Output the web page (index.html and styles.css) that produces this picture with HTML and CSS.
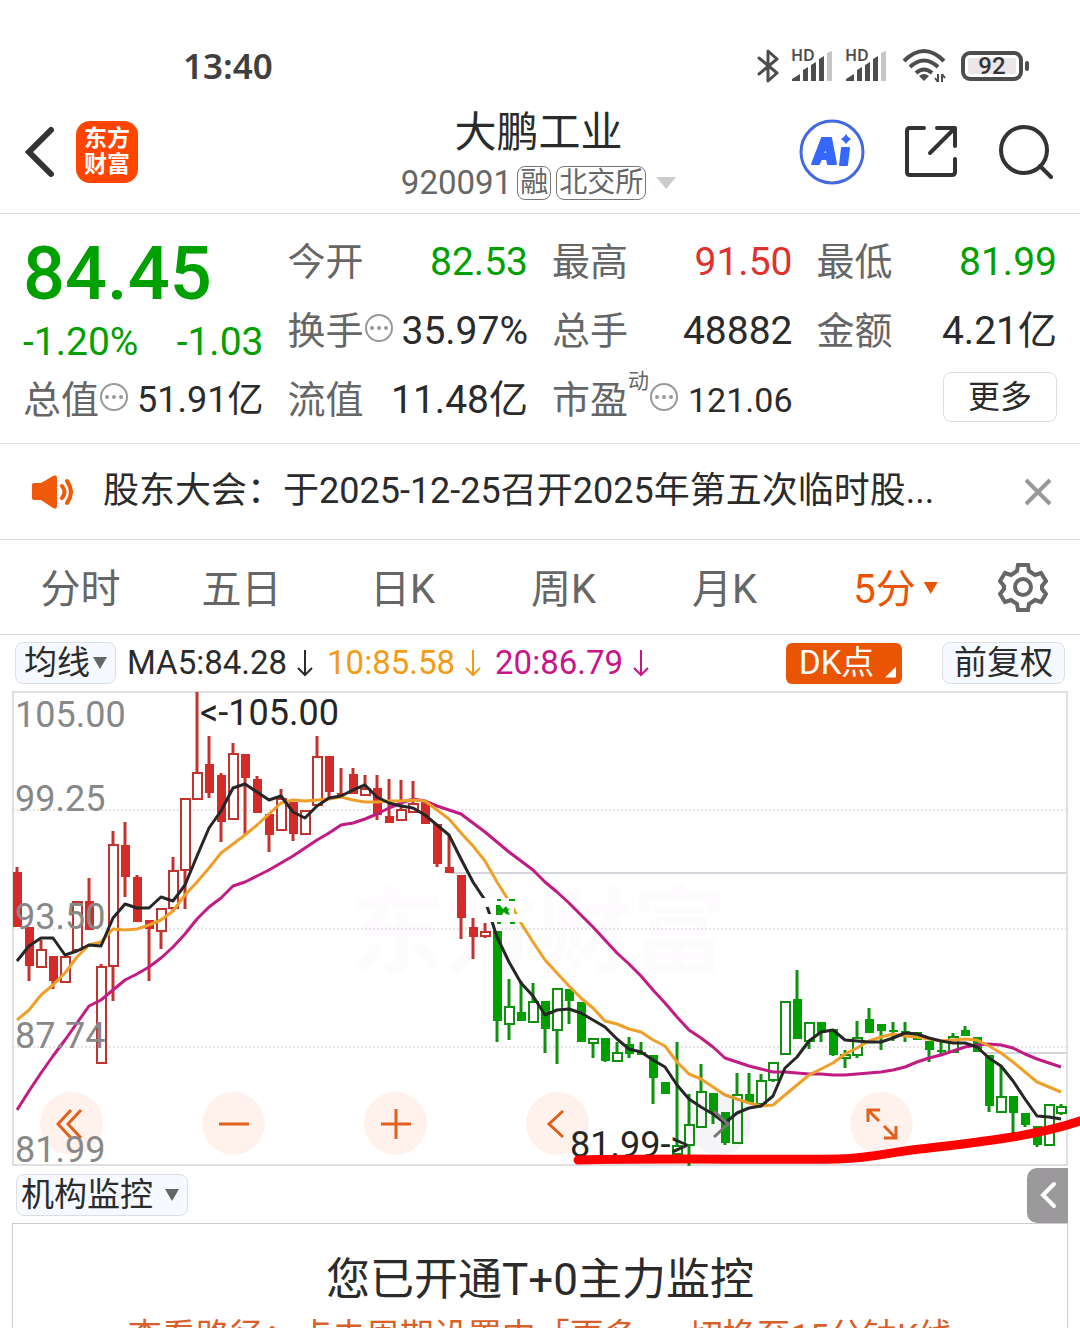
FILE: index.html
```html
<!DOCTYPE html>
<html lang="zh-CN">
<head>
<meta charset="utf-8">
<meta name="viewport" content="width=device-width, initial-scale=1">
<title>大鹏工业 920091</title>
<link rel="stylesheet" href="styles.css">
</head>
<body>
<div class="page">
  <div class="status">
    <time class="clock">13:40</time>
    <div class="status-icons">
      <svg width="22" height="34" viewBox="0 0 22 34" fill="none" stroke="#4d4d4d" stroke-width="3" stroke-linejoin="round" stroke-linecap="round"><path d="M2 9 20 24 11 32V2L20 10 2 25"/></svg>
      <svg class="signal" width="42" height="34" viewBox="0 0 42 34"><text x="0" y="12">HD</text><g fill="#4d4d4d"><path d="M1 32v-2l8-5v7z"/><path d="M12 32V21l5-3v14zM20 32V16l5-3v19zM28 32V10l5-3v25z"/></g><path fill="#c6c6c6" d="M36 32V4l5-2v30z"/></svg>
      <svg class="signal" width="42" height="34" viewBox="0 0 42 34"><text x="0" y="12">HD</text><g fill="#4d4d4d"><path d="M1 32v-2l8-5v7z"/><path d="M12 32V21l5-3v14zM20 32V16l5-3v19zM28 32V10l5-3v25z"/></g><path fill="#c6c6c6" d="M36 32V4l5-2v30z"/></svg>
      <svg class="wifi" width="42" height="36" viewBox="0 0 42 36" fill="none" stroke="#4d4d4d" stroke-width="4"><path d="M1 13Q21-7 41 13M7 19Q21 6 35 19M13 25Q21 18 29 25"/><path d="M21 33l-5-5q5-4 10 0z" fill="#4d4d4d" stroke="none"/><path d="M35 26v8m-3-4 3 4M39 34v-8m3 4-3-4" stroke-width="2"/></svg>
      <span class="battery">92</span>
    </div>
  </div>

  <header class="header">
    <div class="header-left">
      <button class="icon-btn" aria-label="返回"><svg width="32" height="56" viewBox="0 0 32 56" fill="none" stroke="#333" stroke-width="6" stroke-linecap="round" stroke-linejoin="miter"><path d="M27 6 5 28 27 50"/></svg></button>
      <a class="logo" href="#">东方<br>财富</a>
    </div>
    <div class="title">
      <h1>大鹏工业</h1>
      <p class="code"><span>920091</span><span class="tag">融</span><span class="tag">北交所</span><span class="caret caret-code"></span></p>
    </div>
    <div class="header-right">
      <button class="icon-btn" aria-label="AI"><svg width="66" height="66" viewBox="0 0 66 66"><circle cx="33" cy="33" r="31" fill="#fff" stroke="#4169e1" stroke-width="3"/><g fill="#3568fa" stroke="#3568fa" stroke-width="2" stroke-linejoin="round"><path fill-rule="evenodd" d="M23 19h9l5 26h-8l-1-5h-6l-2 5h-7zM27 27l-3 8h4z"/><path d="M43 29h7l-2 17h-7z"/></g><path fill="#3568fa" d="M47 15q2 4 5 5-3 2-5 5-2-3-5-5 3-1 5-5z"/></svg></button>
      <button class="icon-btn" aria-label="分享"><svg width="54" height="54" viewBox="0 0 54 54" fill="none" stroke="#333" stroke-width="4" stroke-linecap="round" stroke-linejoin="round"><path d="M20 3H6Q3 3 3 6V47Q3 50 6 50H48Q51 50 51 47V34M33 3H51V21M51 3 26 28"/></svg></button>
      <button class="icon-btn" aria-label="搜索"><svg width="56" height="56" viewBox="0 0 56 56" fill="none" stroke="#333" stroke-width="4" stroke-linecap="round"><circle cx="27" cy="26" r="23"/><path d="M43 42 54 53"/></svg></button>
    </div>
  </header>

  <section class="stats">
    <div class="col">
      <div class="price down">84.45</div>
      <div class="change down"><span>-1.20%</span><span>-1.03</span></div>
      <div class="cell"><span class="label">总值</span><button class="info" aria-label="总值说明"><i></i><i></i><i></i></button><span class="value medium">51.91亿</span></div>
    </div>
    <div class="col">
      <div class="cell"><span class="label">今开</span><span class="value down">82.53</span></div>
      <div class="cell"><span class="label">换手</span><button class="info" aria-label="换手说明"><i></i><i></i><i></i></button><span class="value">35.97%</span></div>
      <div class="cell"><span class="label">流值</span><span class="value">11.48亿</span></div>
    </div>
    <div class="col">
      <div class="cell"><span class="label">最高</span><span class="value up">91.50</span></div>
      <div class="cell"><span class="label">总手</span><span class="value">48882</span></div>
      <div class="cell"><span class="label">市盈</span><span class="sup">动</span><button class="info" aria-label="市盈说明"><i></i><i></i><i></i></button><span class="value small">121.06</span></div>
    </div>
    <div class="col">
      <div class="cell"><span class="label">最低</span><span class="value down">81.99</span></div>
      <div class="cell"><span class="label">金额</span><span class="value">4.21亿</span></div>
      <div class="cell"><button class="more">更多</button></div>
    </div>
  </section>

  <section class="notice">
    <svg width="42" height="34" viewBox="0 0 42 34" fill="#f0580a"><path d="M1 10q0-2 2-2h7L22 1q4-2 4 2v28q0 4-4 2L10 25H3q-2 0-2-2z"/><path d="M31 11q5 6 0 12M36 6q8 11 0 22" fill="none" stroke="#f0580a" stroke-width="4" stroke-linecap="round"/></svg>
    <a class="notice-text" href="#">股东大会：于2025-12-25召开2025年第五次临时股...</a>
    <button class="icon-btn" aria-label="关闭"><svg width="28" height="28" viewBox="0 0 28 28" stroke="#999" stroke-width="4"><path d="M2 2 26 26M26 2 2 26"/></svg></button>
  </section>

  <nav class="tabs">
    <button>分时</button>
    <button>五日</button>
    <button>日K</button>
    <button>周K</button>
    <button>月K</button>
    <button class="active">5分<span class="caret caret-tab"></span></button>
    <button class="settings" aria-label="设置"><svg width="50" height="50" viewBox="0 0 50 50" fill="none" stroke="#666" stroke-width="4"><path d="M20 3h10l1 6 6 4 6-2 5 8-4 5v3l4 5-5 8-6-2-6 4-1 6H20l-1-6-6-4-6 2-5-8 4-5v-3l-4-5 5-8 6 2 6-4z"/><circle cx="25" cy="25" r="8"/></svg></button>
  </nav>

  <div class="indicators">
    <label class="chip chip-ma"><select aria-label="主图指标"><option>均线</option></select><span class="caret caret-chip"></span></label>
    <span class="ma ma5">MA5:84.28<svg width="18" height="30" viewBox="0 0 18 30"><path d="M9 2V27M2 20 9 27 16 20"/></svg></span>
    <span class="ma ma10">10:85.58<svg width="18" height="30" viewBox="0 0 18 30"><path d="M9 2V27M2 20 9 27 16 20"/></svg></span>
    <span class="ma ma20">20:86.79<svg width="18" height="30" viewBox="0 0 18 30"><path d="M9 2V27M2 20 9 27 16 20"/></svg></span>
    <button class="dk">DK点</button>
    <button class="chip chip-adj">前复权</button>
  </div>

  <section class="chart">
    <svg class="plot" viewBox="0 691 1080 476" id="plot" aria-label="5分钟K线图">
      <text class="watermark" x="350" y="966">东方财富</text>
      <path class="grid" d="M13 810H1067M13 929H1067M13 1047H1067"/>
      <path class="level" d="M449 873H1067M985 1053H1067"/>
      <path class="frame" d="M13 692H1067V1165H13Z"/>
      <g id="candles"></g>
      <g id="averages"></g>
      <g class="mask"><path d="M478 898H528V907H478ZM478 914H530V922H478ZM494 906H514V915H494Z"/></g>
      <path fill="#00a000" d="M497 899h4v2h-4zM509 899h6v2h-6zM496 905h4l3 4 3-3 2 3 2-1-2 3 2 4-4-1-2-2-2 3H496zM497 922h4v2h-4zM510 922h5v2h-5z"/>
    </svg>
    <div class="tools">
      <button aria-label="最左"><svg width="32" height="32" viewBox="0 0 32 32"><path d="M15 2 2 16 15 30M25 2 12 16 25 30"/></svg></button>
      <button aria-label="缩小"><svg width="32" height="32" viewBox="0 0 32 32"><path d="M1 16H31"/></svg></button>
      <button aria-label="放大"><svg width="32" height="32" viewBox="0 0 32 32"><path d="M1 16H31M16 1V31"/></svg></button>
      <button aria-label="左移"><svg width="32" height="32" viewBox="0 0 32 32"><path d="M21 3 7 16 21 29"/></svg></button>
      <button class="off" aria-label="右移"><svg width="32" height="32" viewBox="0 0 32 32"><path d="M10 3 24 16 10 29"/></svg></button>
      <button aria-label="全屏"><svg width="32" height="32" viewBox="0 0 32 32"><path d="M2 14V2H14M2 2 13 13M18 30H30V18M30 30 18 18"/></svg></button>
    </div>
    <svg class="marks" viewBox="0 691 1080 476">
      <g class="scale"><text x="15" y="727">105.00</text><text x="15" y="811">99.25</text><text x="15" y="929">93.50</text><text x="15" y="1048">87.74</text><text x="15" y="1162">81.99</text></g>
      <g class="extreme"><text x="200" y="725">&lt;-105.00</text><text x="570" y="1157">81.99-&gt;</text></g>
      <path class="trend" d="M578 1160C660 1158 770 1160 838 1159 875 1158 890 1152 920 1149 980 1142 1040 1136 1086 1119"/>
    </svg>
  </section>

  <div class="monitor-bar">
    <label class="chip chip-monitor"><select aria-label="副图指标"><option>机构监控</option></select><span class="caret caret-chip"></span></label>
    <button class="handle" aria-label="展开"><svg width="18" height="28" viewBox="0 0 18 28" fill="none" stroke="#fff" stroke-width="4" stroke-linecap="round"><path d="M15 3 4 14 15 25"/></svg></button>
  </div>

  <section class="panel">
    <h2>您已开通T+0主力监控</h2>
    <p>查看路径：点击周期设置中「更多」，切换至15分钟K线</p>
  </section>
</div>
<script src="chart.js"></script>
</body>
</html>
```
FILE: styles.css
```css
* { box-sizing: border-box; }
body {
  margin: 0;
  background: #fff;
  color: #2b2b2b;
  font-family: Roboto, "Noto Sans CJK SC", sans-serif;
  line-height: 1.2;
}
h1, h2, p { margin: 0; font-weight: 400; }
a { color: inherit; text-decoration: none; }
svg { display: block; flex: none; }
button, select { font: inherit; color: inherit; background: none; border: 0; padding: 0; margin: 0; }
select { appearance: none; }
.page { height: 100vh; display: flex; flex-direction: column; overflow: hidden; }
.page > * { flex: none; }
.icon-btn { display: flex; align-items: center; }

.caret { flex: none; width: 14px; height: 12px; background: #666; clip-path: polygon(0 0, 100% 0, 50% 100%); }
.caret-code { width: 20px; height: 12px; margin-left: 10px; background: #ccc; }
.caret-tab { background: #ea5504; margin: 0 0 4px 8px; }

.status {
  height: 100px;
  padding: 32px 50px 0 183px;
  display: flex;
  align-items: center;
  justify-content: space-between;
}
.clock { font: 600 35px/48px "Noto Sans", sans-serif; color: #404040; }
.status-icons { display: flex; align-items: center; gap: 12px; }
.signal { overflow: visible; }
.signal text { font: 600 16px "Noto Sans", sans-serif; fill: #4d4d4d; }
.wifi { margin: 0 4px; overflow: visible; }
.battery {
  position: relative;
  width: 62px;
  height: 30px;
  margin-right: 7px;
  border: 4px solid #4d4d4d;
  border-radius: 9px;
  background: #eae6ea content-box;
  padding: 3px;
  color: #333;
  font-size: 24px;
  line-height: 17px;
  font-weight: 500;
  text-align: center;
}
.battery::after {
  content: "";
  position: absolute;
  right: -10px;
  top: 6px;
  width: 4px;
  height: 10px;
  border-radius: 2px;
  background: #4d4d4d;
}

.header {
  height: 114px;
  padding: 0 27px 0 24px;
  display: grid;
  grid-template-columns: 1fr auto 1fr;
  border-bottom: 1px solid #dcdcdc;
}
.header-left, .header-right { display: flex; align-items: center; padding-bottom: 9px; }
.header-left { gap: 20px; }
.header-right { justify-content: flex-end; gap: 39px; }
.logo {
  width: 62px;
  height: 62px;
  border-radius: 14px;
  background: #ff4400;
  color: #fff;
  font-size: 23px;
  line-height: 26px;
  font-weight: 700;
  text-align: center;
  padding-top: 5px;
}
.title { text-align: center; padding-top: 5px; }
.title h1 { font-size: 42px; line-height: 56px; }
.code { display: flex; align-items: center; justify-content: center; height: 44px; font-size: 33px; color: #666; }
.tag {
  margin-left: 5px;
  padding: 0 2px;
  border: 1px solid #777;
  border-radius: 8px;
  font-size: 28px;
  line-height: 32px;
}

.stats {
  padding: 14px 23px 8px;
  display: grid;
  grid-template-columns: repeat(4, 1fr);
  column-gap: 24px;
  border-bottom: 1px solid #e6e6e6;
}
.price { height: 90px; font-size: 74px; line-height: 92px; font-weight: 500; }
.change { height: 48px; display: flex; justify-content: space-between; font-size: 39px; line-height: 48px; }
.cell { height: 69px; display: flex; align-items: center; white-space: nowrap; }
.label { font-size: 38px; color: #666; }
.value { margin-left: auto; font-size: 39px; }
.value.medium { font-size: 36px; }
.value.small { font-size: 34px; }
.down { color: #00a000; }
.up { color: #e03131; }
.sup { align-self: flex-start; font-size: 21px; line-height: 30px; color: #666; }
.info {
  flex: none;
  width: 28px;
  height: 28px;
  margin: 0 1px 8px;
  border: 2px solid #999;
  border-radius: 50%;
  display: flex;
  align-items: center;
  justify-content: center;
  gap: 3px;
}
.info i { width: 4px; height: 4px; border-radius: 50%; background: #999; }
.more {
  margin: 0 0 8px auto;
  width: 114px;
  height: 50px;
  border: 1px solid #dcdcdc;
  border-radius: 8px;
  font-size: 32px;
  line-height: 46px;
}

.notice {
  height: 96px;
  padding: 0 28px 0 31px;
  display: flex;
  align-items: center;
  border-bottom: 1px solid #dcdcdc;
}
.notice-text { flex: 1; margin-left: 30px; font-size: 36px; white-space: nowrap; }

.tabs {
  height: 95px;
  display: grid;
  grid-template-columns: repeat(6, 161fr) 114fr;
  border-bottom: 1px solid #d6d6da;
  font-size: 40px;
  color: #666;
}
.tabs button { display: flex; align-items: center; justify-content: center; padding-top: 6px; }
.tabs .active { color: #ea5504; padding-left: 20px; }
.tabs .settings { padding-top: 0; }

.indicators { height: 56px; padding: 0 15px; display: flex; align-items: center; }
.chip {
  height: 42px;
  display: flex;
  align-items: center;
  border: 1px solid #dcdfe6;
  border-radius: 8px;
  background: #f6f9ff;
  font-size: 33px;
  line-height: 40px;
}
.chip-ma { width: 101px; padding-left: 8px; gap: 3px; margin-right: 11px; }
.chip-monitor { padding: 0 8px 0 4px; gap: 12px; }
.chip-adj { margin-left: 40px; padding: 0 11px; }
.ma { display: flex; align-items: center; gap: 9px; margin-right: 13px; font-size: 33px; }
.ma svg { fill: none; stroke: currentColor; stroke-width: 2; }
.ma10 { color: #f39b16; }
.ma20 { color: #c7158a; }
.dk {
  position: relative;
  margin-left: auto;
  width: 116px;
  height: 41px;
  padding-left: 13px;
  border-radius: 6px;
  background: #ea5504;
  color: #fff;
  font-size: 33px;
  line-height: 40px;
  text-align: left;
}
.dk::after {
  content: "";
  position: absolute;
  right: 6px;
  bottom: 6px;
  width: 11px;
  height: 11px;
  background: #fff;
  clip-path: polygon(100% 0, 100% 100%, 0 100%);
}

.chart { position: relative; }
.plot, .marks { width: 100%; height: auto; }
.marks { position: absolute; inset: 0; pointer-events: none; overflow: visible; }
.watermark { font-size: 94px; font-weight: 700; fill: #fefbfe; }
.grid { stroke: #ccc; stroke-dasharray: 2 2; }
.level { stroke: #d3d5da; stroke-width: 2; }
.frame { fill: none; stroke: #e0e0e2; stroke-width: 2; }
.candle { stroke-width: 2; }
.candle.red { stroke: #c03430; fill: #d52b28; }
.candle.green { stroke: #109010; fill: #00a000; }
.candle .wick { stroke-width: 3; }
.candle .solid { stroke: none; }
.candle .hollow { fill: #fff; }
.average { fill: none; stroke-width: 3; stroke-linejoin: round; }
.average.ma5 { stroke: #262626; }
.average.ma10 { stroke: #f0a029; }
.average.ma20 { stroke: #c21b83; }
.mask { fill: #fff; }
.scale text { font-size: 36px; fill: #888; }
.extreme text { font-size: 36px; fill: #262626; }
.trend { fill: none; stroke: #f00; stroke-width: 9; stroke-linecap: round; }
.tools {
  position: absolute;
  left: 0;
  right: 0;
  bottom: 12px;
  padding: 0 167px 0 40px;
  display: flex;
  justify-content: space-between;
}
.tools button {
  width: 63px;
  height: 63px;
  border-radius: 50%;
  background: rgba(255, 85, 30, 0.08);
  display: flex;
  align-items: center;
  justify-content: center;
}
.tools svg { fill: none; stroke: #e0601c; stroke-width: 3; }
.tools .off { background: rgba(90, 60, 100, 0.06); }
.tools .off svg { stroke: #777; }

.monitor-bar { height: 56px; padding: 0 12px 0 16px; display: flex; align-items: center; justify-content: space-between; }
.handle {
  width: 41px;
  height: 55px;
  border-radius: 10px 0 0 10px;
  background: #9b999c;
  display: flex;
  align-items: center;
  justify-content: center;
}
.page > .panel {
  flex: 1;
  min-height: 0;
  overflow: hidden;
  margin: 0 12px;
  border: 1px solid #ccc;
  border-bottom: 0;
  text-align: center;
}
.panel h2 { padding-top: 24px; font-size: 44px; line-height: 64px; }
.panel p { font-size: 34px; line-height: 48px; white-space: nowrap; color: #d9602a; }
```
FILE: chart.js
```js
// Each candle: body top, body bottom, wick top, wick bottom, 1 = hollow body.
const candles = [
  [872,927,867,927,0],[927,966,927,981,0],[949,967,940,967,1],[956,981,956,989,0],[956,982,956,982,1],
  [901,950,901,950,1],[901,930,878,930,0],[966,1063,964,1063,1],[844,966,831,1001,1],[845,877,822,897,0],
  [877,922,875,922,0],[920,929,920,981,0],[908,931,908,949,1],[870,908,857,912,1],[798,870,798,909,1],
  [772,799,692,799,1],[764,793,736,798,0],[775,822,773,842,0],[753,819,743,819,1],[754,778,754,835,0],
  [779,813,776,813,0],[814,835,814,852,0],[798,830,789,830,1],[802,834,802,841,0],[810,834,810,834,1],
  [756,805,736,805,1],[756,792,756,798,0],[793,795,768,795,0],[774,794,768,794,0],[788,795,775,795,1],
  [788,815,775,820,0],[816,823,779,823,0],[809,820,780,820,1],[803,812,781,812,1],[802,824,802,824,0],
  [824,864,824,867,0],[867,873,836,873,0],[875,918,875,939,0],[927,937,918,959,0],[931,936,923,938,1],
  [931,1021,931,1042,0],[1006,1024,979,1040,1],[1012,1021,981,1021,0],[1001,1022,983,1022,1],[1001,1029,1001,1053,0],
  [988,1030,988,1064,1],[989,1001,989,1024,0],[1002,1042,1002,1042,0],[1038,1043,1038,1058,1],[1038,1061,1038,1062,0],
  [1052,1061,1042,1061,1],[1044,1054,1037,1058,0],[1052,1055,1042,1055,0],[1055,1078,1055,1104,0],[1082,1094,1082,1094,0],
  [1145,1154,1042,1154,1],[1124,1145,1094,1166,1],[1091,1127,1064,1127,1],[1093,1113,1093,1124,0],[1112,1143,1112,1145,0],
  [1094,1143,1073,1143,1],[1094,1103,1073,1103,0],[1080,1104,1074,1104,1],[1062,1080,1062,1082,1],[1001,1054,1001,1054,1],
  [999,1039,970,1039,0],[1022,1041,1022,1049,1],[1022,1033,1022,1042,0],[1029,1055,1029,1056,0],[1054,1058,1050,1068,1],
  [1037,1055,1021,1058,1],[1019,1033,1008,1033,0],[1024,1031,1024,1050,0],[1030,1032,1022,1041,0],[1031,1033,1022,1042,0],
  [1032,1040,1032,1040,0],[1041,1050,1041,1062,0],[1050,1052,1040,1054,0],[1036,1052,1033,1052,1],[1030,1036,1026,1036,0],
  [1037,1052,1037,1052,0],[1055,1106,1055,1112,0],[1096,1112,1066,1112,1],[1096,1113,1096,1134,0],[1113,1125,1113,1127,0],
  [1126,1145,1126,1147,0],[1104,1145,1104,1145,1],[1106,1113,1104,1115,1]
];

const averages = {
  ma20: [1110,1091,1073,1056,1040,1023,1006,1000,990,980,974,967,958,947,934,919,907,898,886,882,876,870,863,856,848,840,833,825,823,819,814,808,803,799,801,806,810,814,823,832,842,852,861,870,882,892,903,915,927,940,953,964,976,990,1003,1017,1030,1038,1047,1058,1062,1066,1069,1072,1072,1073,1074,1074,1075,1075,1074,1073,1072,1070,1067,1062,1058,1055,1051,1047,1045,1044,1045,1048,1054,1059,1063,1067],
  ma10: [1020,1010,995,985,973,957,945,942,929,930,929,925,920,911,895,882,868,853,844,835,825,814,803,800,801,800,799,797,800,802,802,801,801,800,801,810,819,833,846,861,882,901,923,942,960,973,986,998,1008,1021,1024,1029,1032,1040,1046,1062,1074,1079,1087,1095,1099,1103,1106,1105,1095,1085,1075,1069,1063,1054,1048,1041,1037,1034,1036,1037,1039,1041,1040,1039,1040,1046,1053,1062,1072,1082,1087,1092],
  ma5: [961,946,938,938,955,951,945,946,918,904,908,908,897,901,885,856,828,811,788,784,792,800,796,812,818,806,798,796,790,785,797,803,806,808,815,825,835,859,882,900,937,962,983,996,1015,1010,1009,1013,1020,1027,1039,1049,1052,1060,1067,1085,1099,1107,1114,1123,1113,1108,1106,1096,1068,1057,1041,1032,1030,1040,1041,1042,1042,1038,1033,1034,1038,1041,1043,1043,1047,1058,1066,1081,1099,1116,1117,1119]
};

const firstX = 17;
const step = 12;
const firstGreen = 40;

document.getElementById("candles").innerHTML = candles.map(([top, bottom, high, low, hollow], i) => {
  const x = firstX + i * step;
  const color = i < firstGreen ? "red" : "green";
  const body = hollow
    ? `<rect class="hollow" x="${x - 4}" y="${top + 1}" width="9" height="${bottom - top - 1}"/>`
    : `<rect class="solid" x="${x - 4}" y="${top}" width="9" height="${bottom - top}"/>`;
  return `<g class="candle ${color}"><path class="wick" d="M${x} ${high}V${low}"/>${body}</g>`;
}).join("");

document.getElementById("averages").innerHTML = Object.entries(averages).map(([name, ys]) => {
  const points = ys.map((y, i) => `${firstX + i * step},${y}`).join(" ");
  return `<polyline class="average ${name}" points="${points}"/>`;
}).join("");
```
